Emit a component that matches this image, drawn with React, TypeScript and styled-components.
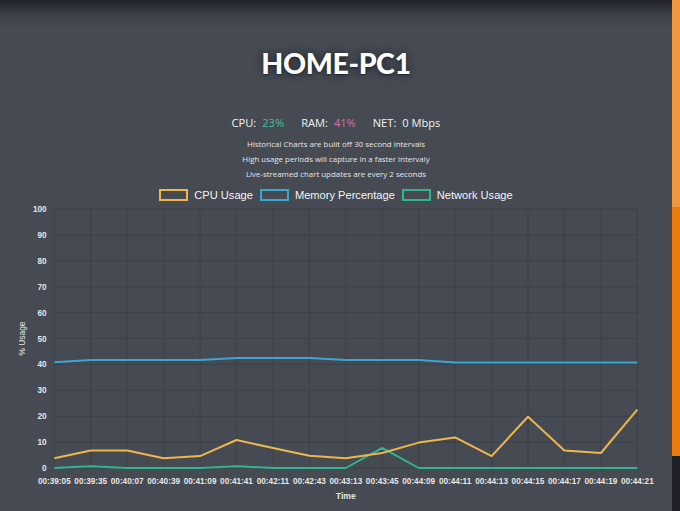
import React from "react";
import styled, { createGlobalStyle } from "styled-components";

const GlobalStyle = createGlobalStyle`
  html, body { margin: 0; padding: 0; background: #454a53; }
  body { overflow: hidden; }
  #root { width: 680px; height: 511px; }
`;

const Page = styled.div`
  display: flex;
  width: 680px;
  height: 511px;
  overflow: hidden;
`;

const Main = styled.main`
  flex: 1;
  display: flex;
  flex-direction: column;
  align-items: center;
  background: linear-gradient(to bottom, #1f2227 0px, #30343a 8px, #40454d 19px, #454a53 30px, #454a53 100%);
  font-family: "Open Sans", "Noto Sans", sans-serif;
  color: #f2f2f2;
`;

const Title = styled.h1`
  margin: 49px 0 0;
  font-family: "Lato", "DejaVu Sans", sans-serif;
  font-weight: 900;
  font-size: 28.5px;
  line-height: 28px;
  letter-spacing: -0.4px;
  color: #ffffff;
  text-shadow: 0 0 10px rgba(0, 0, 0, 0.55), 0 1px 2px rgba(0, 0, 0, 0.4);
`;

const Stats = styled.div`
  margin-top: 38px;
  display: flex;
  gap: 17px;
  font-size: 11.1px;
  line-height: 16px;
`;

const Stat = styled.span`
  display: flex;
  gap: 6px;
`;

const StatValue = styled.span<{ $color?: string }>`
  color: ${(p) => p.$color || "#f2f2f2"};
`;

const Notes = styled.div`
  margin-top: 5.5px;
  display: flex;
  flex-direction: column;
  align-items: center;
  font-size: 7.9px;
  line-height: 15px;
  color: #e6e6e6;
`;

const Legend = styled.div`
  margin-top: 6.5px;
  display: flex;
  gap: 7px;
  height: 14px;
  align-items: center;
  font-family: "Liberation Sans", Arial, sans-serif;
  font-size: 11.1px;
  color: #f4f4f4;
`;

const LegendItem = styled.div`
  display: flex;
  align-items: center;
  gap: 6px;
`;

const LegendBox = styled.span<{ $color: string }>`
  width: 29px;
  height: 12px;
  box-sizing: border-box;
  border: 2px solid ${(p) => p.$color};
`;

const ChartSvg = styled.svg`
  display: block;
  width: 672px;
  height: 309px;
  font-family: "Liberation Sans", Arial, sans-serif;
`;

const Strip = styled.div`
  width: 8px;
  display: flex;
  flex-direction: column;
`;

const StripSeg = styled.div<{ $color: string; $h?: number }>`
  background: ${(p) => p.$color};
  ${(p) => (p.$h ? `height: ${p.$h}px;` : "flex: 1;")}
`;

const labels = [
  "00:39:05", "00:39:35", "00:40:07", "00:40:39", "00:41:09", "00:41:41",
  "00:42:11", "00:42:43", "00:43:13", "00:43:45", "00:44:09", "00:44:11",
  "00:44:13", "00:44:15", "00:44:17", "00:44:19", "00:44:21",
];
const cpu = [3.8, 6.8, 6.8, 3.8, 4.6, 10.8, 7.7, 4.7, 3.8, 5.8, 9.8, 11.8, 4.6, 19.8, 6.8, 5.8, 22.5];
const mem = [40.8, 41.7, 41.7, 41.7, 41.7, 42.5, 42.5, 42.5, 41.7, 41.7, 41.7, 40.7, 40.7, 40.7, 40.7, 40.7, 40.7];
const net = [0, 0.7, 0, 0, 0, 0.7, 0, 0, 0, 7.8, 0, 0, 0, 0, 0, 0, 0];

const X0 = 54.3;
const X1 = 637.3;
const STEP = (X1 - X0) / (labels.length - 1);
const Y0 = 266;
const YS = 2.59;
const xs = (i: number) => X0 + i * STEP;
const ys = (v: number) => Y0 - v * YS;
const pts = (d: number[]) => d.map((v, i) => `${xs(i).toFixed(1)},${ys(v).toFixed(1)}`).join(" ");

const Chart: React.FC = () => {
  const ticks = [0, 10, 20, 30, 40, 50, 60, 70, 80, 90, 100];
  return (
    <ChartSvg viewBox="0 0 672 309">
      <g stroke="#3c4149" strokeWidth="1">
        {ticks.map((t) => (
          <line key={"h" + t} x1={X0} x2={X1} y1={ys(t)} y2={ys(t)} />
        ))}
        {labels.map((l, i) => (
          <line key={"v" + l} x1={xs(i)} x2={xs(i)} y1={ys(100)} y2={Y0} />
        ))}
      </g>
      <g fill="#e6e6e6" fontSize="8.2" fontWeight="bold">
        {ticks.map((t) => (
          <text key={"yt" + t} x={46.6} y={ys(t) + 3} textAnchor="end">
            {t}
          </text>
        ))}
        {labels.map((l, i) => (
          <text key={"xt" + l} x={xs(i)} y={281.6} textAnchor="middle">
            {l}
          </text>
        ))}
        <text x={345.8} y={297.3} textAnchor="middle" fontSize="8.6">
          Time
        </text>
      </g>
      <text
        x={0}
        y={0}
        fill="#e6e6e6"
        fontSize="8.4"
        textAnchor="middle"
        transform="translate(25.4 136.5) rotate(-90)"
      >
        % Usage
      </text>
      <g fill="none" strokeWidth="2" strokeLinejoin="round">
        <polyline points={pts(mem)} stroke="#3aa6d2" />
        <polyline points={pts(net)} stroke="#2fb592" />
        <polyline points={pts(cpu)} stroke="#eeb64b" />
      </g>
    </ChartSvg>
  );
};

export default function App() {
  return (
    <>
      <GlobalStyle />
      <Page>
        <Main>
          <Title>HOME-PC1</Title>
          <Stats>
            <Stat>
              <span>CPU:</span>
              <StatValue $color="#3fc3a0">23%</StatValue>
            </Stat>
            <Stat>
              <span>RAM:</span>
              <StatValue $color="#d672ac">41%</StatValue>
            </Stat>
            <Stat>
              <span>NET:</span>
              <StatValue>0 Mbps</StatValue>
            </Stat>
          </Stats>
          <Notes>
            <span>Historical Charts are built off 30 second intervals</span>
            <span>High usage periods will capture in a faster intervaly</span>
            <span>Live-streamed chart updates are every 2 seconds</span>
          </Notes>
          <Legend>
            <LegendItem>
              <LegendBox $color="#eeb64b" />
              CPU Usage
            </LegendItem>
            <LegendItem>
              <LegendBox $color="#3aa6d2" />
              Memory Percentage
            </LegendItem>
            <LegendItem>
              <LegendBox $color="#2fb592" />
              Network Usage
            </LegendItem>
          </Legend>
          <Chart />
        </Main>
        <Strip>
          <StripSeg $color="#f2963f" $h={207} />
          <StripSeg $color="#ea7a0c" $h={249} />
          <StripSeg $color="#1e1f28" />
        </Strip>
      </Page>
    </>
  );
}
